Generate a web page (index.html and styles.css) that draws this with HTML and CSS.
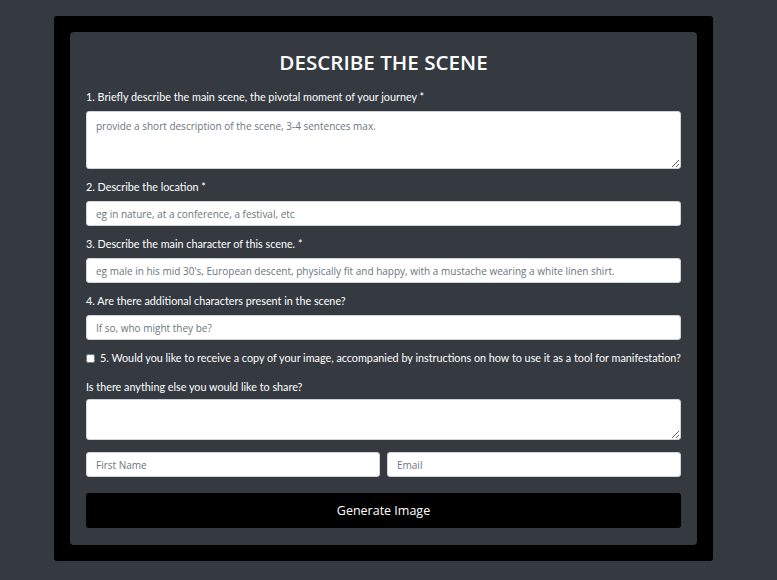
FILE: index.html
```html
<!DOCTYPE html>
<html lang="en">
<head>
<meta charset="utf-8">
<title>Describe the scene</title>
<link rel="stylesheet" href="styles.css">
</head>
<body>
<div class="frame">
  <form class="card">
    <h1 class="title">DESCRIBE THE SCENE</h1>
    <div class="group">
      <label class="label">1. Briefly describe the main scene, the pivotal moment of your journey *</label>
      <textarea class="field area-lg" placeholder="provide a short description of the scene, 3-4 sentences max."></textarea>
    </div>
    <div class="group">
      <label class="label">2. Describe the location *</label>
      <input class="field" type="text" placeholder="eg in nature, at a conference, a festival, etc">
    </div>
    <div class="group">
      <label class="label">3. Describe the main character of this scene. *</label>
      <input class="field" type="text" placeholder="eg male in his mid 30's, European descent, physically fit and happy, with a mustache wearing a white linen shirt.">
    </div>
    <div class="group">
      <label class="label">4. Are there additional characters present in the scene?</label>
      <input class="field" type="text" placeholder="If so, who might they be?">
    </div>
    <div class="check-row">
      <input class="check" type="checkbox" id="copy">
      <label class="check-label" for="copy">5. Would you like to receive a copy of your image, accompanied by instructions on how to use it as a tool for manifestation?</label>
    </div>
    <div class="group group-tight">
      <label class="label">Is there anything else you would like to share?</label>
      <textarea class="field area-sm"></textarea>
    </div>
    <div class="names">
      <input class="field" type="text" placeholder="First Name">
      <input class="field" type="email" placeholder="Email">
    </div>
    <button class="submit" type="button">Generate Image</button>
  </form>
</div>
</body>
</html>
```

FILE: styles.css
```css
* { box-sizing: border-box; }
html, body { margin: 0; }
body {
  background: #343a40;
  padding: 16px 0 0 54px;
  font-family: "Open Sans", sans-serif;
}
.frame {
  width: 659px;
  height: 545px;
  background: #000;
  border-radius: 3px;
  padding: 16px;
}
.card {
  background: #343a40;
  border-radius: 4px;
  height: 513px;
  padding: 16px 16px 0 16px;
  display: flex;
  flex-direction: column;
}
.title {
  margin: 0 0 13px 0;
  text-align: center;
  color: #fff;
  font-family: "Open Sans", sans-serif;
  font-weight: 600;
  font-size: 20.6px;
  line-height: 28px;
}
.group {
  display: flex;
  flex-direction: column;
  margin-bottom: 10px;
}
.label {
  color: #fff;
  font-family: Lato, sans-serif;
  font-size: 10.8px;
  line-height: 16px;
  margin-bottom: 6px;
}
.field {
  display: block;
  width: 100%;
  height: 25px;
  border: 1px solid #ced4da;
  border-radius: 3px;
  background: #fff;
  padding: 0 9px;
  font-family: "Open Sans", sans-serif;
  font-size: 10px;
  color: #495057;
  margin: 0;
}
.field::placeholder { color: #6c757d; }
textarea.field {
  padding: 6px 9px;
  resize: vertical;
  line-height: 16px;
}
.area-lg { height: 58px; }
.area-sm { height: 41px; }
.check-row {
  display: flex;
  align-items: center;
  gap: 5px;
  height: 16px;
  margin: 0 0 13px 0;
}
.check {
  margin: 0;
  width: 9px;
  height: 9px;
  flex: none;
}
.check-label {
  color: #fff;
  font-family: Lato, sans-serif;
  font-size: 10.8px;
  line-height: 16px;
  white-space: nowrap;
}
.group-tight .label { margin-bottom: 4px; }
.names {
  display: flex;
  gap: 7px;
  margin-top: 2px;
  margin-bottom: 16px;
}
.submit {
  height: 35px;
  width: 100%;
  background: #000;
  color: #fff;
  border: 0;
  border-radius: 3px;
  font-family: "Open Sans", sans-serif;
  font-size: 12.5px;
}
```
